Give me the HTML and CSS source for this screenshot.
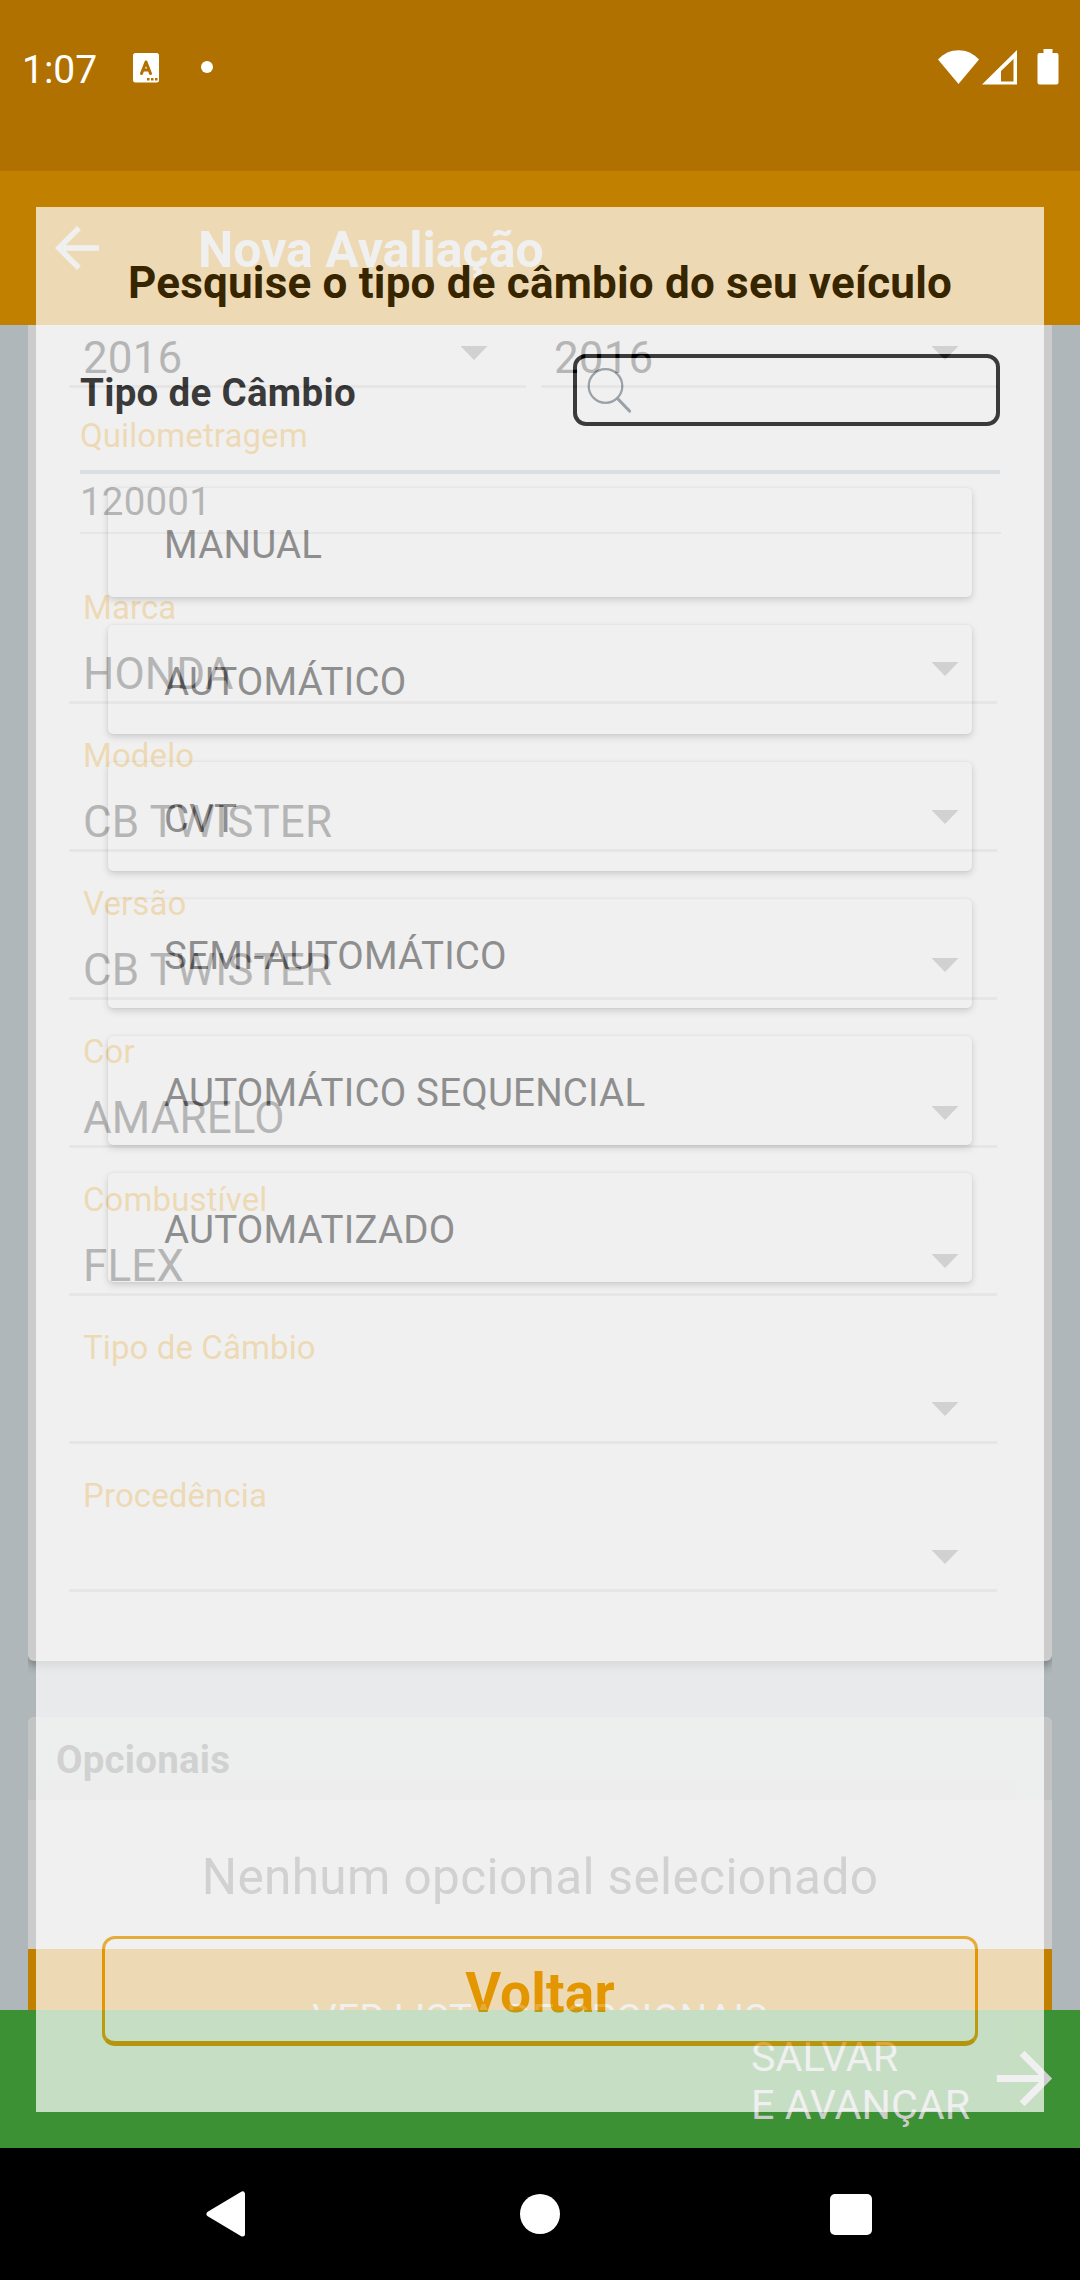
FILE: index.html
```html
<!DOCTYPE html>
<html lang="pt-BR">
<head>
<meta charset="utf-8">
<title>Nova Avaliação</title>
<link rel="stylesheet" href="styles.css">
</head>
<body>
<div class="phone">
  <div class="status">
    <span class="clock">1:07</span>
    <svg class="badge" viewBox="0 0 26 30"><rect width="26" height="29.5" rx="2.5" fill="#fff"/><path d="M8.5 20.5 13 9l4.500 11.500M10.200 17h5.600" fill="none" stroke="#b07100" stroke-width="3" stroke-linecap="round" stroke-linejoin="round"/><path d="M14 25h2.500v2.500H14zM18 25h2.500v2.500H18zM22 25h2.500v2.500H22z" fill="#b07100"/></svg>
    <span class="dot"></span>
    <svg class="system" viewBox="0 0 122 38"><path d="M0 11.500C11-1 30-1 41 11.500L20.500 36z" fill="#fff"/><path d="M44 36.500 79 2v34.500zM63 33.500h12.500V11L63 23z" fill="#fff" fill-rule="evenodd"/><path d="M105.500 1h9v4h4q2 0 2 2v27.500q0 2-2 2h-17q-2 0-2-2V7q0-2 2-2h4z" fill="#fff"/></svg>
  </div>

  <header class="appbar">
    <svg class="back" viewBox="0 0 24 24"><path d="M20 11H7.830l5.590-5.590L12 4l-8 8 8 8 1.410-1.410L7.830 13H20z" fill="#ccc"/></svg>
    <h1>Nova Avaliação</h1>
  </header>

  <main class="page">
    <section class="card form">
      <div class="years">
        <div class="select cut"><span class="value">2016</span><i class="caret"></i></div>
        <div class="select cut"><span class="value">2016</span><i class="caret"></i></div>
      </div>
      <div class="km"><span class="label">Quilometragem</span><span class="number">120001</span></div>
      <div class="select"><span class="label">Marca</span><span class="value">HONDA</span><i class="caret"></i></div>
      <div class="select"><span class="label">Modelo</span><span class="value">CB TWISTER</span><i class="caret"></i></div>
      <div class="select"><span class="label">Versão</span><span class="value">CB TWISTER</span><i class="caret"></i></div>
      <div class="select"><span class="label">Cor</span><span class="value">AMARELO</span><i class="caret"></i></div>
      <div class="select"><span class="label">Combustível</span><span class="value">FLEX</span><i class="caret"></i></div>
      <div class="select"><span class="label">Tipo de Câmbio</span><span class="value"></span><i class="caret"></i></div>
      <div class="select"><span class="label">Procedência</span><span class="value"></span><i class="caret"></i></div>
    </section>
    <section class="card extras">
      <h2>Opcionais</h2>
      <p>Nenhum opcional selecionado</p>
      <div class="see-list">VER LISTA DE OPCIONAIS</div>
    </section>
  </main>

  <footer class="save">
    <span>SALVAR<br>E AVANÇAR</span>
    <svg viewBox="0 0 24 24"><path d="M12 4l-1.410 1.410L16.170 11H4v2h12.170l-5.580 5.590L12 20l8-8z" fill="#ccc"/></svg>
  </footer>

  <nav class="nav">
    <svg viewBox="0 0 39 46"><path d="M36.500 3v40L3 23z" fill="#fff" stroke="#fff" stroke-width="5" stroke-linejoin="round"/></svg>
    <span class="home"></span>
    <span class="recent"></span>
  </nav>

  <div class="dialog">
    <h3>Pesquise o tipo de câmbio do seu veículo</h3>
    <div class="search-row">
      <strong>Tipo de Câmbio</strong>
      <div class="search"><svg viewBox="0 0 46 46"><circle cx="18.500" cy="18" r="16.800" fill="none" stroke="#869099" stroke-width="2.200"/><path d="M31 31 42.500 43" stroke="#869099" stroke-width="3.200" stroke-linecap="round"/></svg></div>
    </div>
    <ul class="options">
      <li>MANUAL</li>
      <li>AUTOMÁTICO</li>
      <li>CVT</li>
      <li>SEMI-AUTOMÁTICO</li>
      <li>AUTOMÁTICO SEQUENCIAL</li>
      <li>AUTOMATIZADO</li>
    </ul>
    <div class="close">Voltar</div>
  </div>
</div>
</body>
</html>
```
FILE: styles.css
```css
* { box-sizing: border-box; margin: 0; padding: 0; }

body { font-family: Roboto, "Liberation Sans", sans-serif; }

.phone {
  position: relative;
  display: flex;
  flex-direction: column;
  width: 1080px;
  height: 2280px;
  overflow: hidden;
  background: #b0b7ba;
}

/* Status bar */
.status {
  display: flex;
  align-items: flex-start;
  height: 171px;
  padding: 48px 20px 0 22px;
  background: #b07100;
  color: #fff;
}
.clock { width: 111px; font-size: 39px; line-height: 44px; }
.badge { width: 26px; height: 30px; margin-top: 5px; }
.dot { width: 12px; height: 12px; margin: 13px 0 0 42px; border-radius: 50%; background: #fff; }
.system { width: 122px; height: 38px; margin: 0 0 0 auto; }

/* App bar */
.appbar {
  display: flex;
  flex: none;
  height: 154px;
  padding-left: 44px;
  background: #c18000;
  color: #ccc;
}
.back { width: 66px; height: 66px; margin-top: 44px; }
.appbar h1 { margin: 49px 0 0 88px; font-size: 50px; line-height: 60px; }

/* Form behind the dialog */
.page { height: 1685px; padding: 0 28px; overflow: hidden; }
.card { background: #ccc; }
.form {
  height: 1336px;
  padding: 0 55px 0 41px;
  border-radius: 0 0 6px 6px;
  box-shadow: 0 5px 9px rgba(0, 0, 0, .3);
  clip-path: inset(0 0 -20px 0);
}
.years { display: grid; grid-template-columns: 457px 456px; justify-content: space-between; }
.select {
  display: flex;
  flex-direction: column;
  position: relative;
  height: 148px;
  padding: 32px 0 0 14px;
  border-bottom: 3px solid #aaa;
}
.select.cut { height: 63px; padding-top: 7px; }
.select.cut + .cut { padding-left: 13px; }
.label { font-size: 33px; line-height: 40px; letter-spacing: .1px; color: #c18000; }
.label + .value { margin-top: 20px; }
.value { font-size: 44px; line-height: 52px; letter-spacing: .1px; color: #000; }
.caret {
  position: absolute;
  right: 38.5px;
  bottom: 25px;
  width: 27px;
  height: 14px;
  background: #606060;
  clip-path: polygon(0 0, 100% 0, 50% 100%);
}
.km {
  display: flex;
  flex-direction: column;
  height: 146px;
  margin: 0 -4px 22px 11px;
  padding-top: 28px;
  border-bottom: 2px solid #aaa;
}
.number { margin-top: 23px; font-size: 38.5px; line-height: 46px; letter-spacing: .2px; }

.extras { height: 400px; margin-top: 56px; border-radius: 6px 6px 0 0; overflow: hidden; color: #606060; }
.extras h2 { height: 83px; padding: 20px 0 0 28px; font-size: 38.5px; line-height: 46px; letter-spacing: .2px; background: #c2c4c3; }
.extras p { height: 149px; padding-top: 47px; font-size: 49.5px; line-height: 60px; letter-spacing: .37px; text-align: center; }
.see-list { height: 168px; padding-top: 47px; background: #c18000; color: #ccc; font-size: 38.5px; line-height: 46px; letter-spacing: .45px; text-align: center; }

.save {
  display: flex;
  justify-content: flex-end;
  flex: none;
  height: 138px;
  padding-right: 14px;
  background: #3b9133;
  color: #ccc;
}
.save span { width: 232px; padding-top: 23px; font-size: 41.25px; line-height: 48px; white-space: nowrap; }
.save svg { width: 83px; height: 83px; margin-top: 27px; }

.nav {
  display: flex;
  justify-content: space-between;
  align-items: center;
  height: 132px;
  padding: 0 208px 0 206px;
  background: #000;
}
.nav svg { width: 39px; height: 46px; }
.home { width: 40px; height: 40px; margin-left: 5px; border-radius: 50%; background: #fff; }
.recent { width: 42px; height: 41px; border-radius: 5px; background: #fff; }

/* Translucent dialog */
.dialog {
  position: absolute;
  left: 36px;
  top: 207px;
  width: 1008px;
  height: 1905px;
  display: flex;
  flex-direction: column;
  background: #fff;
  color: #000;
  opacity: .71;
}
.dialog h3 { padding-top: 50px; font-size: 44px; line-height: 52px; letter-spacing: .2px; text-align: center; }
.search-row {
  display: flex;
  justify-content: space-between;
  height: 120px;
  margin: 45px 44px 0;
  border-bottom: 4px solid #e0e8ee;
  padding-bottom: 44px;
}
.search-row strong { padding-top: 16px; font-size: 38.5px; line-height: 46px; letter-spacing: .3px; }
.search { width: 427px; height: 72px; padding: 10px; border: 4px solid #000; border-radius: 13px; }
.search svg { display: block; width: 46px; height: 46px; }
.options { display: flex; flex-direction: column; gap: 28px; margin: 14px 72px 0; list-style: none; }
.options li {
  height: 109px;
  padding: 34px 56px;
  border-radius: 5px;
  background: #fff;
  box-shadow: 0 3px 7px rgba(0, 0, 0, .2), 0 0 2px rgba(0, 0, 0, .1);
  color: #767676;
  font-size: 38.5px;
  line-height: 46px;
  letter-spacing: .2px;
}
.close {
  height: 110px;
  margin: auto 66px 66px;
  padding-top: 22px;
  border: 3px solid #f1a000;
  border-bottom: 5px solid #e59700;
  border-radius: 13px;
  color: #f1a000;
  font-size: 55px;
  font-weight: 700;
  line-height: 64px;
  letter-spacing: .2px;
  text-align: center;
}
```
